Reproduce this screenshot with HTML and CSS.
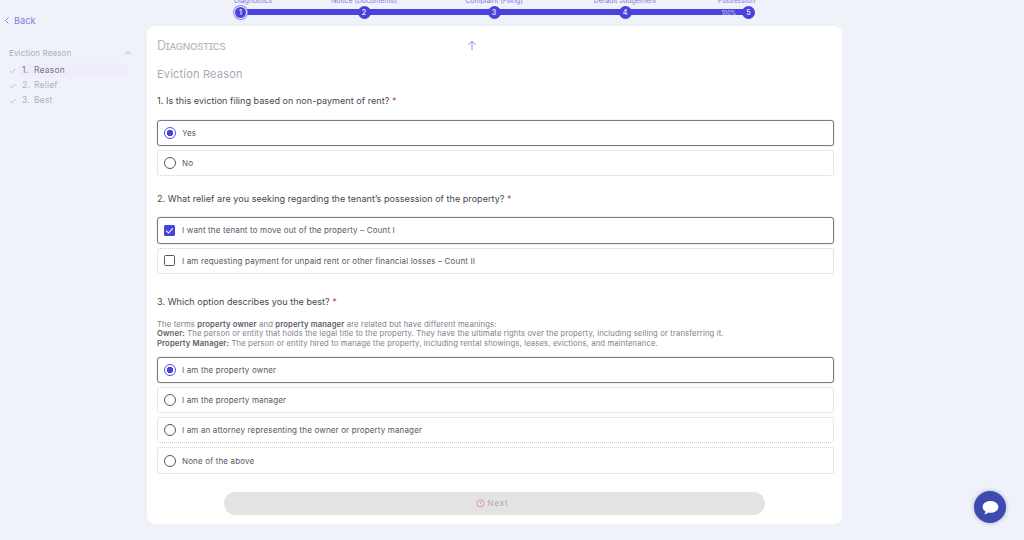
FILE: index.html
```html
<!DOCTYPE html>
<html lang="en">
<head>
<meta charset="utf-8">
<title>Diagnostics</title>
<link rel="stylesheet" href="styles.css">
</head>
<body>
<div class="page">
  <aside class="sidebar">
    <a class="back"><svg class="back-icon" viewBox="0 0 8 12"><path d="M6 2L2 6l4 4"/></svg>Back</a>
    <div class="group-head"><span>Eviction Reason</span><svg class="group-chev" viewBox="0 0 8 6"><path d="M1.500 4L4 1.700 6.500 4"/></svg></div>
    <ul class="nav">
      <li class="nav-row is-current"><svg class="nav-check" viewBox="0 0 10 8"><path d="M1 4l2.600 2.600L9 1.200"/></svg><span class="nav-item"><span class="nav-num">1.</span>Reason</span></li>
      <li class="nav-row"><svg class="nav-check" viewBox="0 0 10 8"><path d="M1 4l2.600 2.600L9 1.200"/></svg><span class="nav-item"><span class="nav-num">2.</span>Relief</span></li>
      <li class="nav-row"><svg class="nav-check" viewBox="0 0 10 8"><path d="M1 4l2.600 2.600L9 1.200"/></svg><span class="nav-item"><span class="nav-num">3.</span>Best</span></li>
    </ul>
  </aside>
  <main class="main">
    <div class="stepper">
      <div class="track"></div>
      <div class="step step-start"><span class="step-label">Diagnostics</span><span class="node node-current">1</span></div>
      <div class="step"><span class="step-label">Notice (Documents)</span><span class="node">2</span></div>
      <div class="step"><span class="step-label">Complaint (Filing)</span><span class="node">3</span></div>
      <div class="step"><span class="step-label">Default Judgement</span><span class="node">4</span></div>
      <div class="step step-end"><span class="step-label">Possession</span><span class="node-wrap"><span class="pct">100%</span><span class="node">5</span></span></div>
    </div>
    <section class="card">
      <div class="card-top">
        <h1 class="title">Diagnostics</h1>
        <svg class="up" viewBox="0 0 10 11"><path d="M5 10V1.200M1.400 4.800L5 1.200l3.600 3.600"/></svg>
      </div>
      <h2 class="subtitle">Eviction Reason</h2>

      <p class="q q1">1. Is this eviction filing based on non-payment of rent? <span class="req">*</span></p>
      <div class="opts">
        <div class="opt is-on"><span class="radio"></span>Yes</div>
        <div class="opt"><span class="radio"></span>No</div>
      </div>

      <p class="q q2">2. What relief are you seeking regarding the tenant’s possession of the property? <span class="req">*</span></p>
      <div class="opts">
        <div class="opt is-on"><span class="box"><svg viewBox="0 0 10 10"><path d="M2 5.200l2.100 2.100L8 3"/></svg></span>I want the tenant to move out of the property – Count I</div>
        <div class="opt"><span class="box"></span>I am requesting payment for unpaid rent or other financial losses – Count II</div>
      </div>

      <p class="q q3">3. Which option describes you the best? <span class="req">*</span></p>
      <div class="help">
        The terms <b>property owner</b> and <b>property manager</b> are related but have different meanings:<br>
        <b>Owner:</b> The person or entity that holds the legal title to the property. They have the ultimate rights over the property, including selling or transferring it.<br>
        <b>Property Manager:</b> The person or entity hired to manage the property, including rental showings, leases, evictions, and maintenance.
      </div>
      <div class="opts">
        <div class="opt is-on"><span class="radio"></span>I am the property owner</div>
        <div class="opt"><span class="radio"></span>I am the property manager</div>
        <div class="opt"><span class="radio"></span>I am an attorney representing the owner or property manager</div>
        <div class="opt"><span class="radio"></span>None of the above</div>
      </div>

      <button class="next" type="button"><svg class="next-icon" viewBox="0 0 10 10"><circle cx="5" cy="5" r="4"/><path d="M5 2.800v2.600M5 6.600v.7"/></svg>Next</button>
    </section>
  </main>
</div>
<a class="chat"><svg viewBox="0 0 24 24"><path d="M12 4.500c-5 0-9 3-9 6.800 0 2.200 1.300 4.100 3.400 5.300-.2 1.200-.8 2.300-1.700 3.100 1.800-.1 3.500-.8 4.800-2 .8.2 1.600.3 2.500.3 5 0 9-3 9-6.700s-4-6.800-9-6.800z"/></svg></a>
</body>
</html>
```
FILE: styles.css
```css
* { box-sizing: border-box; }
html, body { margin: 0; height: 540px; overflow: hidden; }
body {
  background: #eff2f8;
  font-family: Inter, "Liberation Sans", sans-serif;
  color: #44464f;
}
.page { display: flex; height: 540px; }

/* sidebar */
.sidebar { width: 147px; flex: none; padding: 15px 18px 0 4px; }
.back { display: flex; align-items: center; height: 11px; font-size: 9.2px; color: #7f7ce4; gap: 4px; }
.back-icon { width: 6px; height: 9px; fill: none; stroke: #7f7ce4; stroke-width: 1.2; }
.group-head { display: flex; justify-content: space-between; align-items: center; margin: 21px -3px 0 5px; height: 12px; font-size: 8px; color: #a9adb7; letter-spacing: .15px; }
.group-chev { width: 8px; height: 6px; fill: none; stroke: #a9adb7; stroke-width: 1; }
.nav { list-style: none; margin: 4px 0 0 5px; padding: 0; }
.nav-row { display: flex; align-items: center; height: 15px; font-size: 8.5px; color: #b0b3bc; letter-spacing: .2px; }
.nav-check { width: 7px; height: 6px; margin-right: 2px; flex: none; fill: none; stroke: #a9adb7; stroke-width: 1.1; }
.nav-item { flex: 1; display: flex; align-items: center; height: 15px; padding: 0 0 1px 4px; border-radius: 5px; }
.is-current .nav-item { background: #f1ecfb; color: #74767f; }
.nav-num { width: 12px; }

/* main */
.main { width: 695px; flex: none; }
.stepper { position: relative; display: grid; grid-template-columns: 68px 124px 136px 126px 67px; width: 521px; margin: -5px 0 0 87px; height: 31px; }
.track { position: absolute; left: 4px; right: 4px; top: 14px; height: 6px; background: #4a42dc; }
.step { position: relative; display: flex; flex-direction: column; align-items: center; height: 27px; }
.step-start { align-items: flex-start; }
.step-end { align-items: flex-end; }
.step-label { font-size: 7px; line-height: 10px; height: 10px; margin-top: 1px; color: #7e7ce6; white-space: nowrap; letter-spacing: -.03px; }
.node { display: flex; align-items: center; justify-content: center; width: 11px; height: 11px; margin-top: 1px; border-radius: 50%; background: #4a42dc; color: #e6e6fb; font-size: 7px; font-weight: 600; box-sizing: content-box; }
.step .node { box-shadow: 0 0 0 1px #4a42dc; }
.step-start .node { margin-left: 1px; }
.step .node-current { box-shadow: 0 0 0 1px #eff2f8, 0 0 0 2px #8a86ea; }
.node-wrap { display: flex; align-items: center; gap: 7px; padding-right: 1px; }
.pct { font-size: 5.5px; color: #dcdcf8; margin-top: 1px; }

/* card */
.card { display: flow-root; height: 498px; padding: 0 8px 0 10px; background: #fff; border-radius: 8px; }
.card-top { position: relative; display: flex; height: 13px; margin-top: 13px; }
.title { margin: 0; font-size: 12.5px; line-height: 13px; font-weight: 400; font-variant: small-caps; color: #b4b9c4; letter-spacing: -.4px; }
.up { position: absolute; left: 310px; top: 1px; width: 10px; height: 11px; fill: none; stroke: #8f8cec; stroke-width: 1; }
.subtitle { margin: 15px 0 0; font-size: 11px; line-height: 14px; font-weight: 400; color: #a5a9b4; letter-spacing: .2px; }
.q { margin: 0; font-size: 9px; line-height: 14px; color: #44464f; letter-spacing: .05px; }
.q1 { margin-top: 13px; }
.q2 { margin-top: 16px; }
.q3 { margin-top: 21px; }
.req { color: #c9423f; }
.opts { display: flex; flex-direction: column; gap: 4px; margin-top: 12px; }
.q2 + .opts { margin-top: 11px; }
.opt { display: flex; align-items: center; height: 26.2px; padding-left: 6px; font-size: 8px; color: #55575f; letter-spacing: .15px; border: 1px dotted #cfd0d4; border-radius: 3px; }
.opt.is-on { border: 1px solid #7a7a7d; box-shadow: 0 0 1px #7a7a7d; }
.radio { flex: none; width: 12px; height: 12px; margin-right: 6px; border: 1.4px solid #55575f; border-radius: 50%; }
.is-on .radio { border-color: #544de8; background: radial-gradient(circle, #4a42dc 0 3px, #fff 3.5px); }
.box { flex: none; display: flex; width: 11px; height: 11px; margin-right: 7px; border: 1.4px solid #55575f; border-radius: 1.5px; }
.is-on .box { border: 0; background: #4a42dc; }
.box svg { width: 11px; height: 11px; fill: none; stroke: #fff; stroke-width: 1; }
.help { margin-top: 11px; font-size: 7.7px; line-height: 9.7px; color: #7d7f87; letter-spacing: .13px; }
.help b { font-weight: 600; color: #5c5e66; }
.help + .opts { margin-top: 8px; }
.next { display: flex; align-items: center; justify-content: center; gap: 3px; width: 541px; height: 23px; margin: 18px 0 0 67px; padding: 0 5px 0 0; border: 0; border-radius: 12px; background: #e3e3e3; color: #aaaaaa; font: 400 8px Inter, sans-serif; letter-spacing: .8px; }
.next-icon { width: 9px; height: 9px; fill: none; stroke: #d98d84; stroke-width: .9; }

/* chat */
.chat { position: absolute; left: 974px; top: 491px; display: flex; align-items: center; justify-content: center; width: 32px; height: 32px; border-radius: 50%; background: #3f4ab0; box-shadow: 0 0 4px rgba(60,70,150,.4); }
.chat svg { width: 21px; height: 21px; fill: #fff; }
```
